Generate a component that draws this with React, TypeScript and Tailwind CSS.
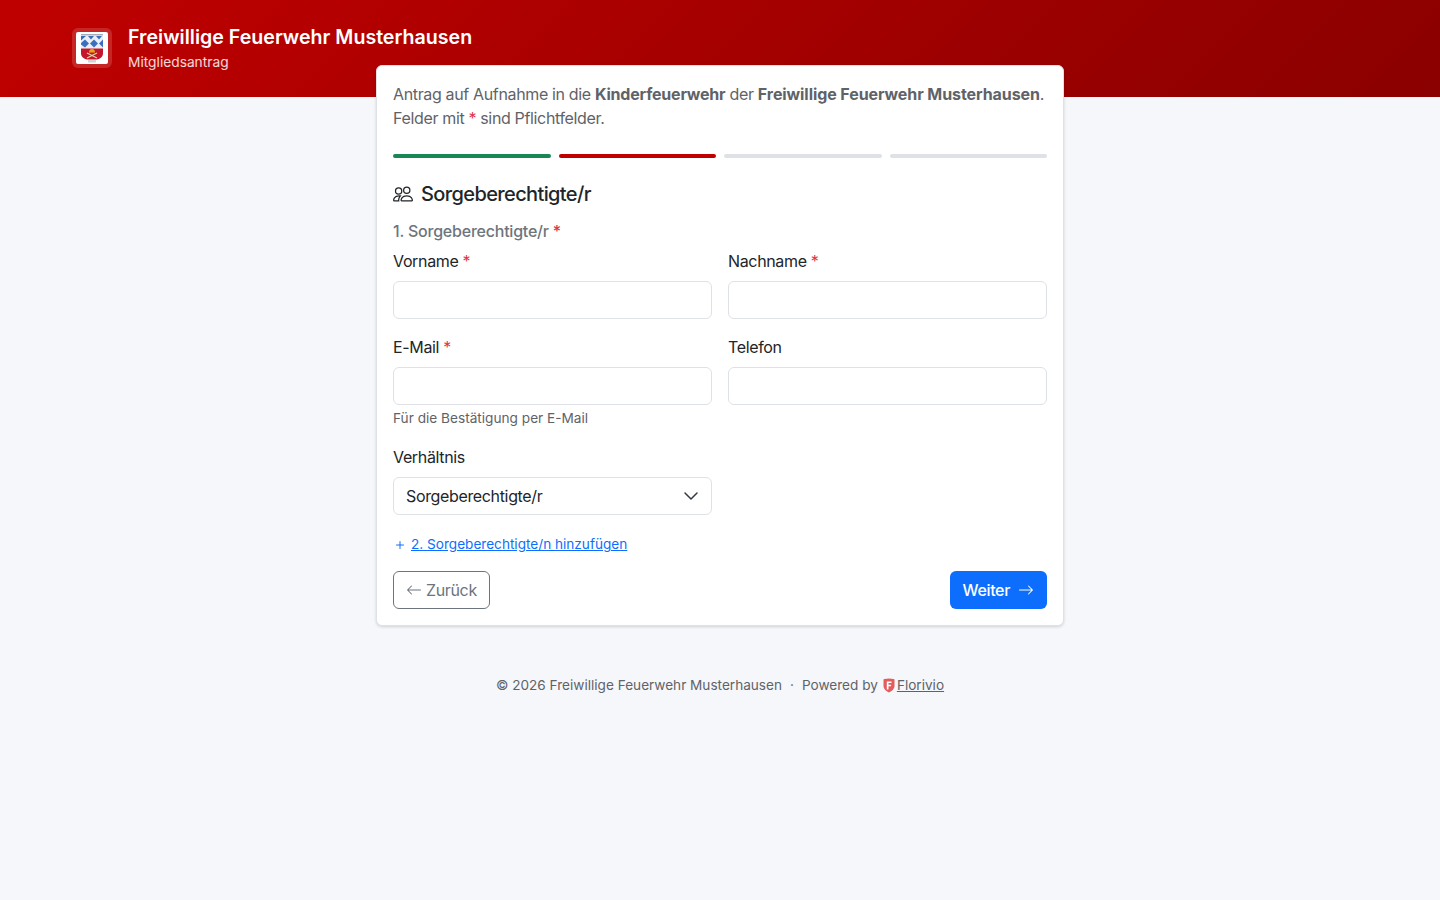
import { BsPeople, BsPlus, BsArrowLeft, BsArrowRight } from "react-icons/bs"

function Crest() {
  return (
    <svg viewBox="0 0 32 32" className="w-8 h-8 bg-white rounded-[2px]">
      <rect x="5" y="2" width="22" height="1.500" fill="#a8adb4" />
      <path d="M5 4h22v12.500H5z" fill="#e9eef8" />
      <path d="M5 4h5L5 8.500zM12 4h6l-3 3.500zM20 4h6l-3 3.500zM5 11l4-3.500 4 4-4 4-4-3zM14 11.500l4-4 4 4-4 4zM23 11.500l4-4v8z" fill="#3a6fbe" />
      <path d="M5 16.500h22V21c0 4-3 6-6 6.500H11C8 27 5 25 5 21z" fill="#c4162a" />
      <path d="M13 20.500c0-2.500 1.300-3.500 3-3.500s3 1 3 3.500z" fill="#e6a417" />
      <path d="M11 26l10-5M21 26l-10-5" stroke="#e3d3a6" strokeWidth="1.200" />
      <rect x="12" y="28" width="8" height="2.500" fill="#d4d4d4" />
    </svg>
  )
}

function Req() {
  return <span className="text-[#dc3545]">*</span>
}

function Field({ label, required, help }: { label: string; required?: boolean; help?: string }) {
  return (
    <div>
      <label className="block mb-2 text-[#212529]">
        {label} {required && <Req />}
      </label>
      <input className="block w-full h-[38px] bg-white border border-[#dee2e6] rounded-md" />
      {help && <div className="mt-[3px] pb-px text-[13.65px] leading-5 tracking-normal text-[#5f6368]">{help}</div>}
    </div>
  )
}

export default function App() {
  return (
    <div className="min-h-[900px] bg-[#f5f7fb] text-base leading-6 tracking-[-0.35px] text-[#212529] font-['Inter',sans-serif]">
      <header className="h-[97px] bg-[linear-gradient(135deg,#c00000,#8b0000)] pl-[72px] pt-[22px] text-white tracking-normal">
        <div className="flex items-center gap-4">
          <div className="w-10 h-10 mt-px rounded-md bg-white/15 flex items-center justify-center">
            <Crest />
          </div>
          <div>
            <div className="text-[19.6px] leading-[30px] font-semibold">Freiwillige Feuerwehr Musterhausen</div>
            <div className="text-[13.75px] leading-[21px] text-white/85">Mitgliedsantrag</div>
          </div>
        </div>
      </header>

      <main className="w-[688px] mx-auto mt-[-32px] relative bg-white border border-[#dee2e6] rounded-md shadow-[0_1px_3px_rgba(0,0,0,0.15)] p-4">
        <p className="text-[#5f6368]">
          Antrag auf Aufnahme in die <b className="font-bold tracking-[-0.2px]">Kinderfeuerwehr</b> der{" "}
          <b className="font-bold tracking-[-0.08px]">Freiwillige Feuerwehr Musterhausen</b>.
          <br />
          Felder mit <Req /> sind Pflichtfelder.
        </p>

        <div className="grid grid-cols-4 gap-2 mt-6">
          <div className="h-1 rounded-full bg-[#198754]" />
          <div className="h-1 rounded-full bg-[#c00000]" />
          <div className="h-1 rounded-full bg-[#dee2e6]" />
          <div className="h-1 rounded-full bg-[#dee2e6]" />
        </div>

        <h2 className="flex items-center gap-2 mt-[21px] text-xl leading-[30px] tracking-[-0.62px] font-medium">
          <BsPeople className="w-5 h-5" />
          Sorgeberechtigte/r
        </h2>

        <div className="mt-[10px] font-medium tracking-[-0.22px] text-[#6c757d]">
          1. Sorgeberechtigte/r <Req />
        </div>

        <div className="grid grid-cols-2 gap-x-4 gap-y-4 mt-1.5">
          <Field label="Vorname" required />
          <Field label="Nachname" required />
          <Field label="E-Mail" required help="Für die Bestätigung per E-Mail" />
          <Field label="Telefon" />
          <div>
            <label className="block mb-2">Verhältnis</label>
            <div className="flex items-center justify-between h-[38px] pl-3 pr-3 border border-[#dee2e6] rounded-md">
              Sorgeberechtigte/r
              <svg viewBox="0 0 16 16" className="w-4 h-4" fill="none" stroke="#343a40" strokeWidth="1.500" strokeLinecap="round" strokeLinejoin="round">
                <path d="m2 5 6 6 6-6" />
              </svg>
            </div>
          </div>
        </div>

        <div className="flex items-center gap-[3px] mt-[19px] text-[13.6px] leading-[21px] tracking-normal text-[#0d6efd]">
          <BsPlus className="w-4 h-4 -ml-px" />
          <a className="underline">2. Sorgeberechtigte/n hinzufügen</a>
        </div>

        <div className="flex justify-between mt-4">
          <button className="flex items-center gap-1 h-[38px] px-3 border border-[#6c757d] rounded-md text-[#6c757d]">
            <BsArrowLeft className="w-4 h-4" />
            Zurück
          </button>
          <button className="flex items-center gap-2 h-[38px] px-[13px] rounded-md bg-[#0d6efd] font-medium text-white">
            Weiter
            <BsArrowRight className="w-4 h-4" />
          </button>
        </div>
      </main>

      <footer className="flex items-center justify-center mt-[48px] text-[13.6px] leading-[21px] tracking-normal text-[#5f6368] pt-px">
        <span>© 2026 Freiwillige Feuerwehr Musterhausen</span>
        <span className="mx-2">·</span>
        <span>Powered by</span>
        <svg viewBox="0 0 12 15" className="w-3 h-[15px] ml-[5px] mr-[2px]">
          <path d="M1.500 1 6 .5l4.500.5c.6 0 1 .4 1 1v6c0 3-2.800 5.200-5.500 6.500C3.300 13.200.5 11 .5 8V2c0-.6.4-1 1-1z" fill="#e35d5d" />
          <path d="M3.800 3.500h4.700V5H5.500v1.800h2.600v1.400H5.500V11.500H3.800z" fill="#fff" />
        </svg>
        <a className="underline">Florivio</a>
      </footer>
    </div>
  )
}
